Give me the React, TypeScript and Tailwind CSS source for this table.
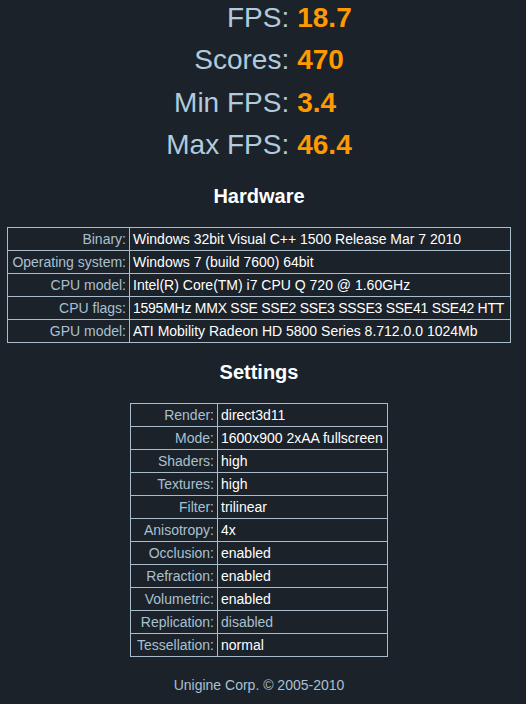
import React from "react";

const hardware: [string, string][] = [
  ["Binary:", "Windows 32bit Visual C++ 1500 Release Mar 7 2010"],
  ["Operating system:", "Windows 7 (build 7600) 64bit"],
  ["CPU model:", "Intel(R) Core(TM) i7 CPU Q 720 @ 1.60GHz"],
  ["CPU flags:", "1595MHz MMX SSE SSE2 SSE3 SSSE3 SSE41 SSE42 HTT"],
  ["GPU model:", "ATI Mobility Radeon HD 5800 Series 8.712.0.0 1024Mb"],
];

const settings: [string, string][] = [
  ["Render:", "direct3d11"],
  ["Mode:", "1600x900 2xAA fullscreen"],
  ["Shaders:", "high"],
  ["Textures:", "high"],
  ["Filter:", "trilinear"],
  ["Anisotropy:", "4x"],
  ["Occlusion:", "enabled"],
  ["Refraction:", "enabled"],
  ["Volumetric:", "enabled"],
  ["Replication:", "disabled"],
  ["Tessellation:", "normal"],
];

const stats: [string, string][] = [
  ["FPS:", "18.7"],
  ["Scores:", "470"],
  ["Min FPS:", "3.4"],
  ["Max FPS:", "46.4"],
];

function Cells({ rows }: { rows: [string, string][] }) {
  return (
    <>
      {rows.map(([k, v]) => (
        <React.Fragment key={k}>
          <div className="h-[23px] border-r border-b border-[#a9bccb] pr-[3px] pl-[3px] pt-[3px] text-right text-[14px] leading-[16px] whitespace-nowrap text-[#a9c0d0]">
            {k}
          </div>
          <div
            className={
              "h-[23px] border-r border-b border-[#a9bccb] pl-[3px] pr-[3px] pt-[3px] text-[14px] leading-[16px] whitespace-nowrap overflow-hidden " +
              (v === "disabled" ? "text-[#a9c0d0]" : "text-white") +
              (k === "CPU flags:" ? " tracking-[-0.25px]" : "")
            }
          >
            {v}
          </div>
        </React.Fragment>
      ))}
    </>
  );
}

export default function App() {
  return (
    <div
      className="w-[526px] min-h-[704px] bg-[#1b222a]"
      style={{ fontFamily: '"Liberation Sans", Arial, sans-serif' }}
    >
      <div className="w-[518px] flex flex-col items-center">
        <div className="pt-[2px] grid grid-cols-[auto_auto] gap-x-[8px] gap-y-[10.4px] text-[28px] leading-[32px]">
          {stats.map(([k, v]) => (
            <React.Fragment key={k}>
              <div className="text-right text-[#b1cbdd] whitespace-nowrap">{k}</div>
              <div className="font-bold text-[#ff9900] whitespace-nowrap">{v}</div>
            </React.Fragment>
          ))}
        </div>

        <h2 className="mt-[24px] text-[20px] leading-[23px] font-bold text-white">Hardware</h2>
        <div className="mt-[19px] grid grid-cols-[122px_381px] border-l border-t border-[#a9bccb]">
          <Cells rows={hardware} />
        </div>

        <h2 className="mt-[18px] text-[20px] leading-[23px] font-bold text-white">Settings</h2>
        <div className="mt-[19px] grid grid-cols-[87px_170px] border-l border-t border-[#a9bccb]">
          <Cells rows={settings} />
        </div>

        <div className="mt-[20px] text-[14px] leading-[16px] text-[#a9c0d0]">
          Unigine Corp. © 2005-2010
        </div>
      </div>
    </div>
  );
}
